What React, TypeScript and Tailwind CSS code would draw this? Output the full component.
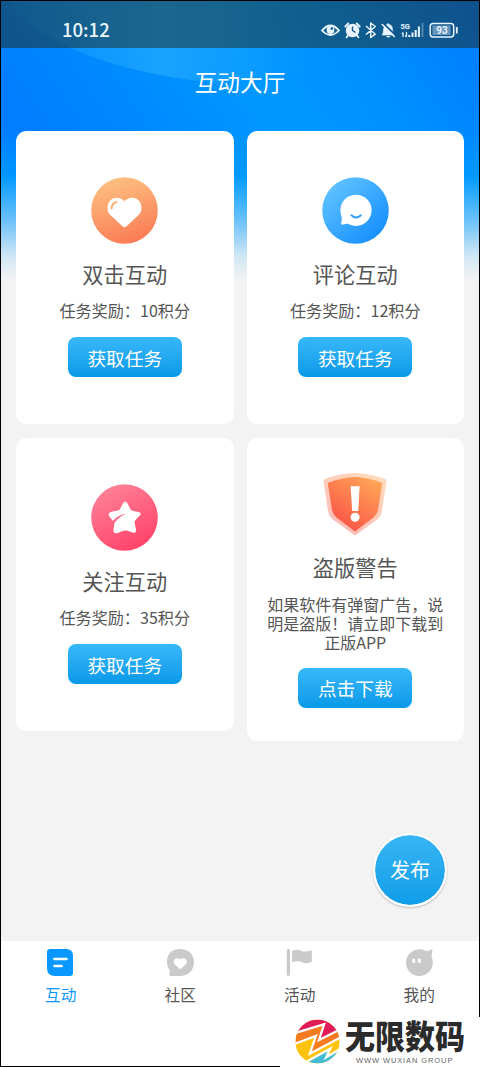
import type { ReactNode } from "react";

function Backdrop() {
  return (
    <svg className="absolute inset-x-0 top-0 h-[290px] w-full" viewBox="0 0 478 290" preserveAspectRatio="none">
      <defs>
        <linearGradient id="sea" x1="0" x2="1" y1="0.4" y2="0">
          <stop offset="0.05" stopColor="#007eff" />
          <stop offset="0.5" stopColor="#0098ff" />
          <stop offset="0.72" stopColor="#0090ff" />
          <stop offset="1" stopColor="#007aff" />
        </linearGradient>
        <linearGradient id="glow" x1="0" x2="1" y1="0" y2="0">
          <stop offset="0" stopColor="#1ca4ff" stopOpacity="0.1" />
          <stop offset="0.4" stopColor="#1ca4ff" stopOpacity="0.9" />
          <stop offset="0.6" stopColor="#18a2ff" stopOpacity="0.5" />
          <stop offset="0.85" stopColor="#0090ff" stopOpacity="0" />
        </linearGradient>
        <linearGradient id="edge" x1="0" x2="0" y1="0" y2="1">
          <stop offset="0.45" stopColor="#009cff" stopOpacity="0" />
          <stop offset="0.62" stopColor="#009cff" stopOpacity="0.9" />
        </linearGradient>
        <linearGradient id="fade" x1="0" x2="0" y1="0" y2="1">
          <stop offset="0.6" stopColor="#f3f3f3" stopOpacity="0" />
          <stop offset="0.76" stopColor="#f3f3f3" stopOpacity="0.45" />
          <stop offset="0.88" stopColor="#f3f3f3" stopOpacity="0.86" />
          <stop offset="0.96" stopColor="#f3f3f3" />
        </linearGradient>
      </defs>
      <rect width="478" height="290" fill="url(#sea)" />
      <path d="M8 0C34 38 100 67 190 79C270 88 350 60 400 0Z" fill="url(#glow)" />
      <rect width="478" height="290" fill="url(#edge)" />
      <rect width="478" height="290" fill="url(#fade)" />
    </svg>
  );
}

function StatusBar() {
  return (
    <header className="flex h-[47px] items-center justify-between bg-[#1e2a1e]/50 pt-3 pr-[19px] pl-[61px] text-[#eaf6ff]">
      <span className="-mt-[3px] font-['Noto_Sans_CJK_SC',sans-serif] text-[18.500px] leading-6 font-medium">10:12</span>
      <svg width="140" height="20" viewBox="320 20 140 20" fill="none" stroke="currentColor">
        <path d="M322 29.500Q330.500 19.500 339 29.500Q330.500 38.500 322 29.500Z" strokeWidth="1.800" />
        <circle cx="330.500" cy="29" r="3.900" fill="currentColor" stroke="none" />
        <circle cx="331.800" cy="27.600" r="1.300" fill="#0f5c95" stroke="none" />
        <circle cx="352.500" cy="29.500" r="6.800" fill="currentColor" stroke="none" />
        <path d="M345.300 25.500l3-3M359.700 25.500l-3-3M348 34.500l-1.500 1.800M357 34.500l1.500 1.800" strokeWidth="1.800" strokeLinecap="round" />
        <path d="M352.500 25.500V29.500L355.500 31.500" stroke="#0f568f" strokeWidth="1.400" />
        <path d="M366 25L375.300 33.200L370.700 36.500V22L375.300 25.500L366 33.500" strokeWidth="1.500" strokeLinejoin="round" />
        <path d="M382 34C384 32 383 29 384 26.500C384.600 24.600 386 23.600 387.300 23.400Q388 21.400 388.900 23.400C392 24 392.500 26.500 392.500 29Q392.600 32 394.400 34Z" fill="currentColor" stroke="currentColor" strokeWidth="0.600" />
        <path d="M386 35H390.500Q388.200 38 386 35Z" fill="currentColor" stroke="none" />
        <path d="M382.900 21.800L396.400 35.100" stroke="#08518f" strokeWidth="1.700" />
        <path d="M381.800 23L394.800 36" strokeWidth="1.500" />
        <path d="M403 31.500V36M402 33L403 31.500M406.500 31V35.500M406.500 36L405.300 34.500" strokeWidth="1.300" />
        <path d="M409.300 34V36M412.500 31.500V36M415.700 29V36M418.900 25.500V36" strokeWidth="2" />
        <path d="M422.500 22V36" strokeWidth="1.700" opacity="0.350" />
        <text x="400.500" y="28" fontSize="7.500" fontWeight="700" fill="currentColor" stroke="none" fontFamily="Roboto, sans-serif">5G</text>
        <rect x="430.200" y="22.500" width="23.500" height="13.500" rx="3" strokeWidth="1.500" />
        <rect x="432.500" y="24.500" width="18" height="9.500" fill="currentColor" stroke="none" opacity="0.400" />
        <path d="M456.800 26V32.500" strokeWidth="1.800" />
        <text x="442" y="33" textAnchor="middle" fontSize="10" fontWeight="600" fill="currentColor" stroke="none" fontFamily="Roboto, sans-serif">93</text>
      </svg>
    </header>
  );
}

const HeartIcon = () => (
  <svg className="size-[67px] shrink-0" viewBox="0 0 67 67">
    <defs>
      <linearGradient id="orange" x1="0.35" x2="0.65" y1="0" y2="1">
        <stop stopColor="#fcc080" />
        <stop offset="1" stopColor="#fb7a55" />
      </linearGradient>
    </defs>
    <circle cx="33.500" cy="33.500" r="33.300" fill="url(#orange)" />
    <path d="M31.700 49.400L18.800 37.500C14.800 33 16.200 24.500 21.500 21.700C26 19.500 30.500 21 33.500 24.200C36.500 21 41 19.500 45.500 21.700C50.800 24.500 52.200 33 48.200 37.500L35.300 49.400Q33.500 51 31.700 49.400Z" fill="white" />
    <path d="M20.700 31.200Q20.800 26.200 25.500 24.900" fill="none" stroke="#fcaa73" strokeWidth="1.900" strokeLinecap="round" />
  </svg>
);

const CommentIcon = () => (
  <svg className="size-[67px] shrink-0" viewBox="0 0 67 67">
    <defs>
      <linearGradient id="blue" x1="0.1" x2="0.85" y1="0.1" y2="0.9">
        <stop stopColor="#62c4ff" />
        <stop offset="1" stopColor="#158fff" />
      </linearGradient>
    </defs>
    <circle cx="33.500" cy="33.500" r="33.300" fill="url(#blue)" />
    <circle cx="34" cy="33.300" r="15.600" fill="white" />
    <path d="M18.400 34Q20.800 41.500 19 46.500Q19.200 48.200 21 47.600L29 46Z" fill="white" />
    <path d="M29.500 38.300Q34 42.700 38.800 38.300" fill="none" stroke="#319fff" strokeWidth="2" strokeLinecap="round" />
  </svg>
);

const StarIcon = () => (
  <svg className="size-[67px] shrink-0" viewBox="0 0 67 67">
    <defs>
      <linearGradient id="pink" x1="0.2" x2="0.7" y1="0" y2="1">
        <stop stopColor="#fe8498" />
        <stop offset="1" stopColor="#ff4168" />
      </linearGradient>
    </defs>
    <circle cx="33.500" cy="33.500" r="33.300" fill="url(#pink)" />
    <path d="M32 19Q34.200 15.800 36.300 19L39.300 25.100Q40 26.400 41.500 26.800L47.500 27.900Q51.200 28.800 48.800 31.600L44.300 36.300Q43.300 37.500 43.700 39L45 45.700Q45.100 49.700 41.500 48.500L36 46.600Q33.600 46 31.500 47L26.300 49.200Q22.200 50 22.400 46L23.500 39L18.300 32.500Q16.200 28.700 20.500 27.700L27 26.500Q28.600 26.200 29.200 24.800Z" fill="white" />
    <path d="M21.800 41.500Q25.500 34.500 35 29.500Q27.500 30.800 21.500 37Z" fill="#ff6e88" />
  </svg>
);

const ShieldIcon = () => (
  <svg className="h-[64px] w-[66px] shrink-0" viewBox="0 0 66 64">
    <defs>
      <linearGradient id="shield" x1="0.8" x2="0.25" y1="0.05" y2="0.85">
        <stop stopColor="#ffa357" />
        <stop offset="1" stopColor="#fb5948" />
      </linearGradient>
    </defs>
    <path d="M33 1Q17 1.500 3 7Q1.300 7.500 1.600 9.500L6 38.500Q6.800 44.500 11.500 48L33 63.500L54.500 48Q59.300 44.500 60 38.500L64.500 9.500Q64.700 7.500 63 7Q49 1.500 33 1Z" fill="url(#shield)" opacity="0.400" />
    <path d="M33 5Q20 5.500 7 10.500Q5.800 11 6 12.500L10 38Q10.800 42.500 14.500 45.500L33 59.500L51.500 45.500Q55.200 42.500 56 38L60 12.500Q60.200 11 59 10.500Q46 5.500 33 5Z" fill="url(#shield)" />
    <path d="M28.600 14.300H37.600L36.300 39H30.200Z" fill="white" />
    <circle cx="33.100" cy="45.200" r="4.500" fill="white" />
  </svg>
);

type CardProps = { icon: ReactNode; title: string; children: ReactNode; action: string; warning?: boolean };

function TaskCard({ icon, title, children, action, warning }: CardProps) {
  return (
    <section className={warning ? "flex h-[303px] flex-col items-center rounded-[10px] bg-white pt-[34px]" : "flex h-[293px] flex-col items-center rounded-[10px] bg-white pt-[46px]"}>
      {icon}
      <h2 className={warning ? "mt-4 text-[21.200px] leading-[30px]" : "mt-[15px] text-[21.200px] leading-[30px]"}>{title}</h2>
      <div className={warning ? "mt-[13px] text-center text-[16px] leading-[18.800px]" : "mt-3 text-center text-[16.100px] leading-[19px]"}>{children}</div>
      <button className={warning ? "mt-[16.600px] h-10 w-[114px] rounded-lg bg-linear-to-b from-[#36b8fa] to-[#0699e8] text-[18.700px] leading-10 text-white" : "mt-[17px] h-10 w-[114px] rounded-lg bg-linear-to-b from-[#36b8fa] to-[#0699e8] text-[18.700px] leading-[39px] text-white"}>{action}</button>
    </section>
  );
}

const tabs: { label: string; icon: ReactNode; active?: boolean }[] = [
  {
    label: "互动",
    active: true,
    icon: (
      <>
        <path d="M3 0H19Q26 0 26 7V24Q26 27 23 27H8Q0 27 0 19V3Q0 0 3 0Z" fill="#0a98fe" />
        <path d="M7.500 10H19.500M7.500 17H14.500" stroke="white" strokeWidth="2.500" strokeLinecap="round" />
      </>
    ),
  },
  {
    label: "社区",
    icon: (
      <>
        <path d="M0 14C-.5 5 5 0 13 0C21 0 27 5 27 13.300C27 21.500 21 27 13 27H3.200Q2.600 27 2.600 26V21Q.2 18 0 14Z" fill="#cacaca" />
        <path d="M12.300 19.600L7.400 14.900C4.900 11.300 9.500 6.900 13.300 10.600C17 6.900 21.800 11.300 19.200 14.900L14.300 19.600Q13.300 20.500 12.300 19.600Z" fill="white" />
      </>
    ),
  },
  {
    label: "活动",
    icon: (
      <>
        <path d="M2.400 1.800V25.200" stroke="#cacaca" strokeWidth="3.400" strokeLinecap="round" />
        <path d="M6 2.100Q11 -.5 15.500 2Q20 3.500 25.800 1.200V12.700Q20.500 15.500 15.500 13Q11 11.500 6 13.300Z" fill="#cacaca" />
      </>
    ),
  },
  {
    label: "我的",
    icon: (
      <>
        <path d="M20.800 2.300L25.800 .5Q26.600 .3 26.400 1.200L25.500 7.500Q27.500 12 26.500 16.500C25 23 19 27 13.400 27C5.500 27 0 21 0 13.500C0 3.500 11.500 -3.500 20.800 2.300Z" fill="#cacaca" />
        <ellipse cx="7.700" cy="11.800" rx="1.700" ry="2.400" fill="white" />
        <ellipse cx="13.300" cy="11.800" rx="1.700" ry="2.400" fill="white" />
      </>
    ),
  },
];

function TabBar() {
  return (
    <nav className="grid h-[125px] shrink-0 grid-cols-4 bg-white pt-2">
      {tabs.map((tab) => (
        <div key={tab.label} className="flex flex-col items-center">
          <svg className="h-[27px] w-[27px] shrink-0" viewBox="0 0 27 27" fill="none">{tab.icon}</svg>
          <span className={tab.active ? "mt-2 text-[15.700px] leading-[22px] text-[#0a98fe]" : "mt-2 text-[15.700px] leading-[22px] text-[#555]"}>{tab.label}</span>
        </div>
      ))}
    </nav>
  );
}

function BrandMark() {
  return (
    <aside className="absolute right-0 bottom-0 flex h-[50px] w-[200px] bg-white pl-[15px]">
      <svg className="mt-[2px] size-[45px] shrink-0" viewBox="-0.5 -0.5 44 44">
        <defs>
          <clipPath id="disc"><circle cx="21.500" cy="21.500" r="21.500" /></clipPath>
        </defs>
        <g clipPath="url(#disc)">
          <rect width="43" height="43" fill="#ffc20d" />
          <path d="M0 13L28 4L23 20L43 10V0H0Z" fill="#df1c57" />
          <path d="M0 13L28 4L23 20L43 10V18L14 34L20 16L0 23Z" fill="#f57a20" />
          <path d="M10 43L34 29L30 37L43 29V43Z" fill="#42bcd5" />
          <path d="M20 16L14 34L43 18V29L30 37L34 29L10 43H0V23Z" fill="#ffc20d" />
          <path d="M0 13L28 4.500L23 20L43 10M0 23.500L20 16L14 33.500L43 18M9 42L34 28.500L30 37L43 29" fill="none" stroke="white" strokeWidth="2.200" />
        </g>
      </svg>
      <div className="flex flex-col pl-[5px]">
        <span className="mt-[1px] h-[34px] origin-center scale-y-110 text-[30px] leading-[34px] font-black text-[#2b2b2b]">无限数码</span>
        <span className="mt-[4px] ml-[11px] font-['Liberation_Sans',sans-serif] text-[7.500px] leading-[10px] tracking-[0.900px] whitespace-nowrap text-[#666]">WWW WUXIAN GROUP</span>
      </div>
    </aside>
  );
}

export default function App() {
  return (
    <div className="relative h-[1067px] w-full overflow-hidden bg-[#f3f3f3] font-['Noto_Sans_CJK_SC',sans-serif] text-[#555]">
      <div className="relative h-full border border-black">
        <Backdrop />
        <div className="relative flex h-full flex-col">
          <StatusBar />
          <h1 className="h-[83px] pt-[17px] text-center text-[22.700px] leading-[33px] text-white">互动大厅</h1>
          <main className="grid flex-1 grid-cols-2 content-start items-start gap-x-[13px] gap-y-[14px] pr-[15px] pl-[15px]">
            <TaskCard icon={<HeartIcon />} title="双击互动" action="获取任务">任务奖励：10积分</TaskCard>
            <TaskCard icon={<CommentIcon />} title="评论互动" action="获取任务">任务奖励：12积分</TaskCard>
            <TaskCard icon={<StarIcon />} title="关注互动" action="获取任务">任务奖励：35积分</TaskCard>
            <TaskCard icon={<ShieldIcon />} title="盗版警告" action="点击下载" warning>
              如果软件有弹窗广告，说<br />明是盗版！请立即下载到<br />正版APP
            </TaskCard>
          </main>
          <TabBar />
        </div>
      </div>
      <button className="absolute top-[833px] right-[33px] size-[74px] rounded-full border-2 border-white bg-linear-to-b from-[#36b5f5] to-[#0e9de9] bg-clip-padding text-[20px] text-white shadow-[0_1px_2px_rgba(0,0,0,0.25)]">发布</button>
      <BrandMark />
    </div>
  );
}
